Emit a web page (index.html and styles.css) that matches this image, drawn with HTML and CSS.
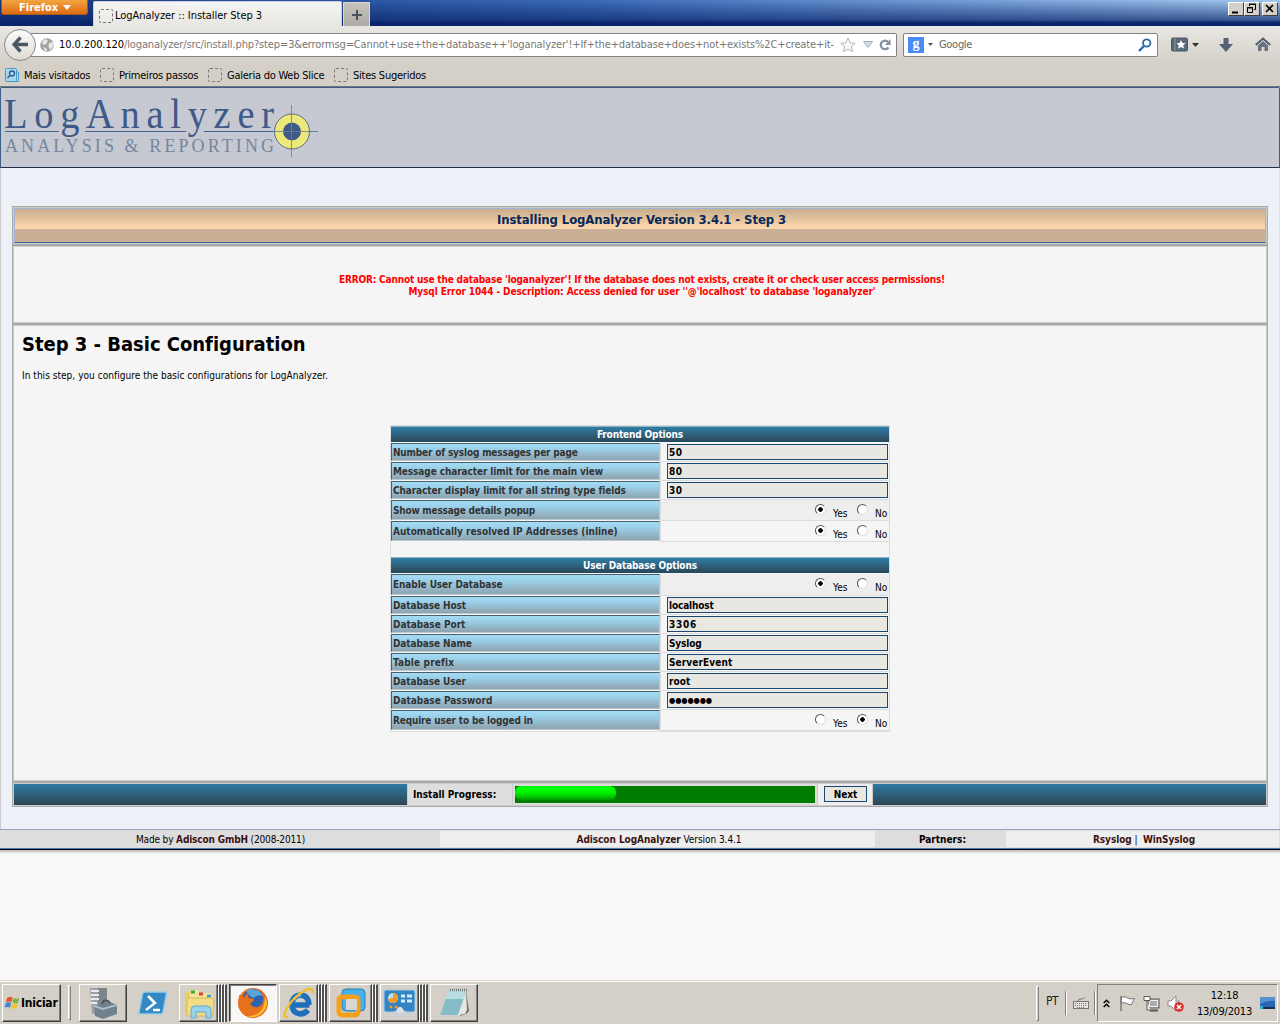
FILE: index.html
```html
<!DOCTYPE html>
<html lang="pt">
<head>
<meta charset="utf-8">
<title>LogAnalyzer :: Installer Step 3</title>
<link rel="stylesheet" href="styles.css">
</head>
<body>
<header class="titlebar">
  <div class="ff-button"><span>Firefox</span><svg width="8" height="5"><path d="M0 0h8L4 5z" fill="#fff"/></svg></div>
  <div class="tab"><i class="dotted"></i><span class="t-tab">LogAnalyzer :: Installer Step 3</span></div>
  <div class="newtab"><svg width="12" height="12"><path d="M6 1v10M1 6h10" stroke="#49525e" stroke-width="2"/></svg></div>
  <div class="winbtns">
    <b><svg width="15" height="13"><path d="M4 10.500h6" stroke="#000" stroke-width="2"/></svg></b>
    <b><svg width="15" height="13" fill="none" stroke="#000"><path d="M5.500 4V2.500h6v5H10M5 2h7M3.500 5.500h5v5h-5zM3 6h6"/></svg></b>
    <b class="close"><svg width="15" height="13"><path d="M4 3l7 7M11 3l-7 7" stroke="#000" stroke-width="1.600"/></svg></b>
  </div>
</header>
<nav class="toolbar">
  <div class="back"><svg width="17" height="17"><path d="M8.500 1.500L2 8.500l6.500 7M2.500 8.500H16" fill="none" stroke="#4a5866" stroke-width="3.400"/></svg></div>
  <div class="urlbar">
    <svg width="14" height="14"><circle cx="7" cy="7" r="6.800" fill="#a3a3a3"/><path d="M2 3l4-2 2 2-2 3-3 1zM9 5l4-1 .5 4-3 4-2-3zM3 9l3 1 1 3-2 0z" fill="#e8e8e8"/></svg>
    <span class="url"><em>10.0.200.120</em><span class="t-url">/loganalyzer/src/install.php?step=3&amp;errormsg=Cannot+use+the+database++'loganalyzer'!+If+the+database+does+not+exists%2C+create+it-</span></span>
    <svg class="star" width="16" height="16"><path d="M8 1l2.100 4.800 5 .5-3.800 3.400 1.200 5.100L8 12.100l-4.500 2.700 1.200-5.100L.9 6.300l5-.5z" fill="#fafafa" stroke="#b5b5b5"/></svg>
    <svg class="drop" width="10" height="7"><path d="M.5.500h9L5 6.500z" fill="#d9dfe6" stroke="#9eabb8"/></svg>
    <svg class="reload" width="12" height="12"><path d="M9.500 8.500a4.300 4.300 0 1 1-.3-5.500" fill="none" stroke="#8190a0" stroke-width="2.200"/><path d="M11.500 0v6H6z" fill="#8190a0"/></svg>
  </div>
  <div class="search">
    <span class="g">g</span><svg width="5" height="3"><path d="M0 0h5L2.500 3z" fill="#555"/></svg><span class="t-goo">Google</span>
    <svg class="lens" width="14" height="14"><circle cx="8.700" cy="5" r="3.700" fill="none" stroke="#2a68b0" stroke-width="1.800"/><path d="M6 8L1 13" stroke="#2a68b0" stroke-width="2.400"/></svg>
  </div>
  <svg class="bm" width="28" height="15"><rect x=".5" y="1" width="16" height="13" rx="1.500" fill="#5b6a78" stroke="#465564"/><path d="M4 1v13" stroke="#8996a2"/><path d="M10 3l1.400 3 3.100.3-2.300 2.100.8 3.200-3-1.700-3 1.700.8-3.200-2.300-2.100 3.100-.3z" fill="#fff"/><path d="M21 6h7l-3.500 4z" fill="#333"/></svg>
  <svg class="dl" width="14" height="14"><path d="M4.500 0h5v6H14l-7 8-7-8h4.500z" fill="#536273"/></svg>
  <svg class="home" width="16" height="15"><path d="M.8 8L8 1.500 15.200 8" fill="none" stroke="#4d5c6c" stroke-width="2"/><path d="M3 8.500l5-4.500 5 4.500V14H9.500v-4h-3v4H3z" fill="#66737f"/></svg>
</nav>
<nav class="bookmarks">
  <svg width="14" height="15"><rect x=".5" y=".5" width="11" height="13" rx="1" fill="#a8d4ee" stroke="#4a9ac8"/><path d="M12 4h1.500v9.500H6" fill="none" stroke="#4a9ac8"/><circle cx="7" cy="5.500" r="2.500" fill="none" stroke="#205d90" stroke-width="1.300"/><path d="M5 7.500L2.500 10" stroke="#205d90" stroke-width="1.500"/></svg>
  <span class="b1">Mais visitados</span><i class="dotted"></i>
  <span class="b2">Primeiros passos</span><i class="dotted"></i>
  <span class="b3">Galeria do Web Slice</span><i class="dotted"></i>
  <span>Sites Sugeridos</span>
</nav>

<main class="page">
  <div class="logo">
    <svg width="330" height="78" viewBox="0 0 330 78" font-family="Liberation Serif, serif">
      <path d="M4 43.500H58M84 43.500H185M203 43.500H317" stroke="#44618f"/>
      <g transform="scale(1 1.12)"><text x="3" y="35.700" font-size="38.500" textLength="270" fill="#3f5a87">LogAnalyzer</text></g>
      <text x="4" y="64" font-size="18" textLength="269" fill="#76869e">ANALYSIS &amp; REPORTING</text>
      <circle cx="291" cy="43.500" r="17.500" fill="#ece97b" stroke="#5a6b88"/>
      <circle cx="291" cy="43.500" r="9" fill="#3f5a87"/>
      <path d="M290.500 17v52M272 43.500h45" stroke="#6d7e9a" stroke-opacity=".85"/>
    </svg>
  </div>
  <section class="install">
    <div class="banner"><h2>Installing LogAnalyzer Version 3.4.1 - Step 3</h2></div>
    <div class="error">
      <p class="e1">ERROR: Cannot use the database 'loganalyzer'! If the database does not exists, create it or check user access permissions!</p>
      <p class="e2">Mysql Error 1044 - Description: Access denied for user ''@'localhost' to database 'loganalyzer'</p>
    </div>
    <div class="step">
      <h1>Step 3 - Basic Configuration</h1>
      <p class="intro">In this step, you configure the basic configurations for LogAnalyzer.</p>
      <form class="options">
        <div class="head">Frontend Options</div>
        <div class="row"><label class="s1">Number of syslog messages per page</label><div class="cell"><input value="50"></div></div>
        <div class="row"><label>Message character limit for the main view</label><div class="cell"><input value="80"></div></div>
        <div class="row"><label>Character display limit for all string type fields</label><div class="cell"><input value="30"></div></div>
        <div class="row tall alt"><label class="s2">Show message details popup</label><div class="cell"><i class="radio on"></i><span class="yes">Yes</span><i class="radio"></i><span class="no">No</span></div></div>
        <div class="row tall"><label class="s0">Automatically resolved IP Addresses (inline)</label><div class="cell"><i class="radio on"></i><span class="yes">Yes</span><i class="radio"></i><span class="no">No</span></div></div>
        <div class="spacer"></div>
        <div class="head">User Database Options</div>
        <div class="row tall alt extra"><label>Enable User Database</label><div class="cell"><i class="radio on"></i><span class="yes">Yes</span><i class="radio"></i><span class="no">No</span></div></div>
        <div class="row"><label>Database Host</label><div class="cell"><input class="in1" value="localhost"></div></div>
        <div class="row"><label class="s0">Database Port</label><div class="cell"><input class="in2" value="3306"></div></div>
        <div class="row"><label>Database Name</label><div class="cell"><input class="in1" value="Syslog"></div></div>
        <div class="row"><label class="sp">Table prefix</label><div class="cell"><input value="ServerEvent"></div></div>
        <div class="row"><label>Database User</label><div class="cell"><input value="root"></div></div>
        <div class="row"><label class="s0">Database Password</label><div class="cell"><input class="pw" value="●●●●●●●"></div></div>
        <div class="row tall"><label class="s1">Require user to be logged in</label><div class="cell"><i class="radio"></i><span class="yes">Yes</span><i class="radio on"></i><span class="no">No</span></div></div>
      </form>
    </div>
    <div class="progress">
      <div class="teal"></div>
      <div class="plabel">Install Progress:</div>
      <div class="pbar"><div class="track"><div class="fill"></div></div></div>
      <div class="pnext"><button type="button">Next</button></div>
      <div class="teal"></div>
    </div>
  </section>
  <footer class="footer">
    <div class="f1">Made by <b>Adiscon GmbH</b> (2008-2011)</div>
    <div class="f2"><b>Adiscon LogAnalyzer</b> Version 3.4.1</div>
    <div class="f3"><strong>Partners:</strong></div>
    <div class="f4"><b>Rsyslog</b> | &nbsp;<b>WinSyslog</b></div>
  </footer>
</main>
<div class="void"></div>

<footer class="taskbar">
  <div class="tbtn start"><svg width="17" height="16"><path d="M3 3q3-2 5.500-.5L7.500 7Q5 6 2 7z" fill="#e8542a"/><path d="M9.300 3q3 1.500 6 0L14 8q-3 1.200-5.500-.3z" fill="#7db53c"/><path d="M1.800 8q3-1.300 5.300 0L6 12.500Q3 11.300.6 12.500z" fill="#3b86d8"/><path d="M8.200 8.600q2.500 1.500 5.500.2L12.500 13q-2.500 1.500-5.500 0z" fill="#f7c22c"/></svg><span>Iniciar</span></div>
  <i class="grip"></i>
  <div class="tbtn w48 g1"><svg width="34" height="34"><path d="M4 2h9v26H6z" fill="#9ba1a6"/><path d="M12 2h9v20h-9z" fill="#7d848a"/><path d="M5 5h8M5 9h8M5 13h8M5 17h6" stroke="#e8ecee" stroke-width="2"/><path d="M8 20l16-4 7 3v9l-14 5-8-3z" fill="#71828f"/><path d="M8 20l9 3 14-4" stroke="#aebcc6" fill="none" stroke-width="2"/><path d="M16 18q1-5 6-3l2 2" stroke="#4b5860" fill="none" stroke-width="2"/></svg></div>
  <svg class="ps" width="30" height="26"><path d="M7 2h20q2 0 1.500 2L25 22q-.5 2-2.500 2H2.500Q.5 24 1 22L4.500 4Q5 2 7 2z" fill="#3289c4" stroke="#9ccbe6" stroke-width="1.500"/><path d="M10 6l7 7-9 7M15 20h7" fill="none" stroke="#fff" stroke-width="2.500"/></svg>
  <div class="tbtn w38 g2"><svg width="34" height="32"><path d="M3 5l10-1 3 3 14 3v20l-27-2z" fill="#e9cd6e"/><path d="M8 3h8l2 3h10l3 3v18H8z" fill="#f5e29a"/><path d="M5 11h27l-1 18H5z" fill="#f3dc86" stroke="#d9b95a"/><path d="M9 5h4" stroke="#3da53d" stroke-width="3"/><path d="M17 7h4" stroke="#d8472c" stroke-width="3"/><path d="M25 9h4" stroke="#3e97da" stroke-width="2.500"/><path d="M9 31v-8q0-4 4-4h12q4 0 4 4v8h-5v-6H14v6z" fill="#9ad3ec" stroke="#5eabd0"/></svg></div><i class="stk"></i><i class="stk"></i><i class="stk last"></i>
  <div class="tbtn w48 active"><svg width="32" height="32"><circle cx="16" cy="16" r="15" fill="#e66a1b"/><circle cx="16" cy="12.500" r="10.500" fill="#2c63ac"/><path d="M9 4q6-4 13 0l4 5q-5-2-8 1t-9-6z" fill="#58a5dc"/><path d="M2 8l5 3q1-4 5-5-2 3 0 5l5 1q0 3-4 4 2 5 8 4 5-2 6-8 1 3 0 5 2-5-1-11 8 9 2 18-6 8-15 6Q0 26 2 8z" fill="#e8711b"/><path d="M28 9q5 11-4 18-7 5-14 2 12 0 16-8 2-5 2-12z" fill="#fbc02e"/></svg></div>
  <div class="tbtn w38 g3"><svg width="34" height="32"><path d="M27.500 18H12.500M26 23q-3 4-8 4-8-1-8-9.500T18 8q8.500 0 9 10" fill="none" stroke="#1f6fbd" stroke-width="5.500"/><path d="M12 13q2-5 7-4.500" fill="none" stroke="#6fc0f0" stroke-width="2.500"/><path d="M6 30q-6 1-2-7Q10 11 22 4q9-5 9 2" fill="none" stroke="#f2bd2e" stroke-width="2.500"/></svg></div><i class="stk"></i><i class="stk"></i><i class="stk last"></i>
  <div class="tbtn w43 g4"><svg width="32" height="32"><rect x="7" y="2" width="23" height="22" rx="4" fill="#4ab0ea" stroke="#257fb8"/><rect x="4" y="10" width="19" height="18" rx="3" fill="none" stroke="#f5a01d" stroke-width="5"/><rect x="12" y="8" width="14" height="14" fill="none" stroke="#f5a01d" stroke-width="0"/><path d="M11 12h11v11H11z" fill="#d8d7d0"/></svg></div><i class="stk"></i><i class="stk last"></i>
  <div class="tbtn w38 g5"><svg width="34" height="32"><rect x="1" y="3" width="31" height="22" rx="2" fill="#3384c4" stroke="#a4cfeb"/><circle cx="10" cy="11" r="5" fill="#b9def5"/><path d="M10 11V6a5 5 0 1 1-5 6z" fill="#f39a28"/><path d="M18 9h4M18 14h4M24 9h5M24 14h5" stroke="#d5ecf8" stroke-width="3"/><circle cx="8" cy="20" r="1.500" fill="#f39a28"/><circle cx="13" cy="20" r="1.500" fill="#f39a28"/><ellipse cx="17" cy="27" rx="7" ry="4.500" fill="#cdd1d5"/><circle cx="17" cy="23" r="3" fill="#e0e3e6"/></svg></div><i class="stk"></i><i class="stk"></i><i class="stk last"></i>
  <div class="tbtn w48"><svg width="34" height="32"><path d="M12 3h17l-5 23-5 2H3z" fill="#86bcc8"/><path d="M12 3h17l-2 9H8z" fill="#b9dde3"/><path d="M29 4l3 20-3 3-6 2z" fill="#6a6f66"/><path d="M29 5l-8 23 7-1 2-4z" fill="#e6e8e0"/><path d="M13 3h17" stroke="#6e7d80" stroke-width="2.500" stroke-dasharray="1 1"/></svg></div>
  <div class="tray-left"><i class="grip"></i><span class="pt">PT</span><i class="thin"></i>
    <svg width="17" height="14"><rect x=".5" y="5.500" width="15" height="7" fill="#e6e4de" stroke="#777"/><path d="M2 7.500h12M2 9.500h12M4 11.500h8" stroke="#777" stroke-dasharray="1 1"/><path d="M5 5q0-2 3-2t4-2" stroke="#777" fill="none"/></svg><i class="thin k"></i></div>
  <div class="tray">
    <svg class="chev" width="7" height="9"><path d="M.7 4l2.800-2.700L6.300 4M.7 8l2.800-2.700L6.300 8" fill="none" stroke="#000" stroke-width="1.500"/></svg>
    <svg class="flag" width="17" height="17"><path d="M2 1v15" stroke="#777" stroke-width="1.500"/><path d="M2.500 2q4-1 6 1 2 1.500 7 .5-2 3-3 6-3 .5-4-.8-2-1.500-6-.7z" fill="#fff" stroke="#777"/></svg>
    <svg class="net" width="17" height="17"><rect x="5" y="4" width="11" height="9" fill="#c4c2bd" stroke="#555"/><rect x="6.500" y="5.500" width="8" height="6" fill="#aaa" stroke="#fff" stroke-width=".8"/><path d="M7 15.500h8" stroke="#555" stroke-width="2"/><path d="M1 1.500h6v4H1zM4 6v9h3" fill="#fff" stroke="#555"/></svg>
    <svg class="vol" width="18" height="17"><path d="M1 6h3l5-5v15l-5-5H1z" fill="#fff" stroke="#888"/><path d="M11 5q2 2 0 4" stroke="#888" fill="none"/><circle cx="12" cy="12" r="4.800" fill="#d93030"/><path d="M10 10l4 4M14 10l-4 4" stroke="#fff" stroke-width="1.600"/></svg>
    <div class="clock"><span>12:18</span><span>13/09/2013</span></div>
    <svg class="desk" width="15" height="14"><rect y="1" width="15" height="11" fill="#2a66b4"/><path d="M0 1h15v4Q8 4 0 8z" fill="#5590d2"/><path d="M3 12h12" stroke="#1b2f55" stroke-width="2"/><path d="M0 10h3v3H0z" fill="#2cb3d8"/></svg>
  </div>
</footer>
</body>
</html>
```
FILE: styles.css
```css
* { box-sizing: border-box; }
body { margin: 0; width: 1280px; height: 1024px; overflow: hidden; display: flex; flex-direction: column; background: #f9f9f9; font: 11px/13px "DejaVu Sans Condensed", "DejaVu Sans", sans-serif; color: #000; }
p, h1, h2 { margin: 0; }
svg { display: block; flex: none; }
span, em, p { white-space: nowrap; font-style: normal; }
i { display: block; flex: none; }
.void { height: 130px; flex: none; background: linear-gradient(#b8b8b8, #f9f9f9 4px); }

.titlebar { height: 26px; flex: none; display: flex; align-items: flex-start; background: linear-gradient(180deg, transparent 20px, #0a246a 23px), linear-gradient(180deg, transparent, rgba(10,36,106,.75) 22px), linear-gradient(90deg, #17387c, #3a6ab8 45%, #a6caf0); }
.ff-button { width: 87px; height: 15px; margin-left: 1px; padding-left: 17px; display: flex; align-items: center; gap: 5px; background: linear-gradient(#f3a541, #dd6b12); border-radius: 0 0 3px 3px; border: 1px solid #a8591c; border-top: 0; color: #fff; font-weight: bold; }
.tab { width: 249px; height: 25px; margin: 1px 1px 0 5px; padding: 3px 0 0 5px; display: flex; align-items: center; gap: 2px; background: linear-gradient(#f4f4f2, #e9e7e3); border: 1px solid #c9d1e0; border-bottom: 0; border-radius: 2px 2px 0 0; }
.t-tab { letter-spacing: -.056px; }
.dotted { width: 14px; height: 14px; border: 1px dashed #777; border-radius: 2px; }
.newtab { width: 27px; height: 24px; margin-top: 2px; display: flex; align-items: center; justify-content: center; background: linear-gradient(#c6c3bc, #aeaba4); border: 1px solid #dad7d0; border-bottom: 0; }
.winbtns { margin: 2px 2px 0 auto; display: flex; }
.winbtns b { width: 16px; height: 14px; background: #d4d0c8; border: 1px solid; border-color: #fff #404040 #404040 #fff; }
.winbtns svg { margin: -1px; }
.winbtns .close { margin-left: 2px; }

.toolbar { height: 37px; flex: none; display: flex; align-items: center; padding: 0 9px 0 4px; background: linear-gradient(#e9e7e3, #d4d0c8); }
.back { width: 32px; height: 32px; margin-right: -5px; z-index: 1; border: 1px solid #84888c; border-radius: 50%; background: linear-gradient(#fbfbfa, #dedbd5); display: flex; align-items: center; justify-content: center; }
.urlbar { width: 866px; height: 24px; border: 1px solid #828282; border-left: 0; border-radius: 0 2px 2px 0; background: #fff; display: flex; align-items: center; padding-left: 9px; }
.url { width: 781px; margin-left: 5px; color: #777; display: flex; }
.url em { color: #000; letter-spacing: -.09px; }
.t-url { letter-spacing: -.127px; }
.drop { margin-left: 7px; }
.reload { margin-left: 6px; }
.search { width: 255px; height: 24px; margin-left: 6px; padding: 0 5px 0 4px; border: 1px solid #828282; border-radius: 2px; background: #fff; display: flex; align-items: center; color: #666; }
.g { width: 16px; height: 16px; background: #4a8af4; color: #fff; text-align: center; font: bold 14px/14px "Liberation Serif", serif; margin-right: 4px; }
.t-goo { margin-left: 6px; letter-spacing: -.3px; }
.lens { margin-left: auto; }
.bm { margin-left: 13px; }
.dl { margin-left: 20px; }
.home { margin-left: auto; }

.bookmarks { height: 24px; flex: none; display: flex; align-items: center; padding: 1px 0 0 5px; background: #d4d0c8; border-bottom: 1px solid #6d7580; letter-spacing: -.24px; }
.bookmarks span { margin-left: 5px; }
.bookmarks .b1 { width: 76px; }
.bookmarks .b2 { width: 89px; }
.bookmarks .b3 { width: 107px; }

.page { height: 763px; flex: none; display: flex; flex-direction: column; background: #edf0f6; border-left: 1px solid #ccc; border-right: 1px solid #ddd; border-top: 1px solid #3d5c80; font-size: 10px; line-height: 12px; }
.logo { height: 80px; margin: 0 -1px; background: #c6c9d2; border: 1px solid #3d6088; border-width: 0 1px 1px; border-bottom-color: #1e2c44; flex: none; }
.install { margin: 38px 11px 0; height: 601px; flex: none; border: 1px solid #a8a8a8; display: flex; flex-direction: column; gap: 2px; background: #a8a8a8; }
.banner { height: 37px; flex: none; padding: 1px; background: #ccc; }
.banner h2 { height: 35px; border: 1px solid; border-color: #9fb6d8 #9fb6d8 #3a60a0; background: linear-gradient(#c8ad8c, #ffd9ae 20px, #c8af96 20px); text-align: center; color: #06285a; font-size: 13px; line-height: 21px; padding-left: 3px; letter-spacing: -.1px; }
.error { height: 77px; flex: none; border: 1px solid #ccc; background: #f5f5f5; padding: 27px 0 0 4px; text-align: center; font-weight: bold; color: #f00; }
.e1 { letter-spacing: -.168px; }
.e2 { letter-spacing: -.107px; }
.step { height: 456px; flex: none; border: 1px solid #ccc; background: #f5f5f5; padding: 6px 8px 0; }
h1 { font-size: 20px; line-height: 24px; letter-spacing: -.02px; }
.intro { margin-top: 14px; letter-spacing: .035px; }
.options { width: 500px; margin: 43px 0 0 368px; border: 1px solid #dcdcdc; font-weight: bold; }
.head { height: 16px; margin-bottom: 1px; text-align: center; color: #fff; line-height: 15px; background: linear-gradient(#2f7da6, #2d4a5a); border-top: 1px solid #8eb4c4; border-bottom: 1px solid #1c4b63; letter-spacing: -.14px; }
.row { height: 19px; display: flex; }
.tall { height: 21px; }
.extra { height: 22px; }
.row label { width: 269px; height: calc(100% - 1px); border: 1px solid; border-color: #48616c #b9c9d0 #b9c9d0 #48616c; background: linear-gradient(#a3dbf5, #9bd0ea 30%, #8fa3ae); color: #333; padding: 2px 0 0 1px; display: flex; align-items: center; letter-spacing: -.105px; white-space: nowrap; }
.extra label { padding-top: 0; }
.row .s0 { letter-spacing: -.01px; }
.row .s1 { letter-spacing: -.172px; }
.row .s2 { letter-spacing: -.228px; }
.row .sp { letter-spacing: .15px; }
.cell { flex: 1; border-left: 1px solid #dcdcdc; border-bottom: 1px solid #dcdcdc; display: flex; justify-content: flex-end; padding: 1px 1px 0 0; }
.alt .cell { background: #eee; }
input { width: 221px; height: 16px; border: 1px solid #1b4670; border-radius: 0; background: #e8e7e1; padding: 0 1px; margin: 0; font: bold 10px/14px "DejaVu Sans Condensed", sans-serif; letter-spacing: .1px; color: #000; outline: 0; }
input[value="50"], input[value="80"], input[value="30"] { letter-spacing: .6px; }
.in1 { letter-spacing: -.15px; }
.in2 { letter-spacing: .7px; }
.pw { font-size: 8px; letter-spacing: -.15px; }
.cell span { font-weight: normal; line-height: 12px; padding-top: 7px; height: 18px; }
.yes { width: 15px; margin: 0 9px 0 7px; }
.no { width: 13px; margin-left: 7px; }
.radio { width: 11px; height: 11px; margin-top: 3px; border-radius: 50%; border: 1px solid; border-color: #555 #ddd #ddd #555; background: #fff; }
.radio.on { background: radial-gradient(circle, #000 2px, #fff 2.500px); }
.spacer { height: 14px; }
.options .spacer + .head { margin-top: 1px; }

.progress { height: 23px; flex: none; border: 1px solid #ccc; display: flex; background: #ccc; gap: 1px; }
.teal { width: 393px; background: linear-gradient(#2d7ba4, #2d4450); }
.plabel { width: 104px; background: #dedede; padding-left: 5px; line-height: 22px; font-weight: bold; }
.pbar { width: 304px; background: #ddd; padding: 2px; }
.track { height: 17px; background: #007c00; }
.fill { width: 101px; height: 14px; border-radius: 6px; background: linear-gradient(#0f0 30%, #00e000 60%, #009a00); }
.pnext { width: 54px; background: #eee; padding: 2px 0 0 6px; }
button { width: 43px; height: 16px; border: 1px solid #1b4670; background: #e8e7e1; padding: 1px 0 0; font: bold 10px/12px "DejaVu Sans Condensed", sans-serif; display: block; }
.footer { height: 21px; margin: 22px -1px 0; flex: none; border-top: 1px solid #90a5bf; border-bottom: 1px solid #000; box-shadow: inset 0 -1px #4a7cb8; background: #ddd; display: flex; padding: 1px 1px 2px; text-align: center; line-height: 18px; }
.footer b { color: #3c1414; }
.f1 { width: 439px; letter-spacing: -.15px; }
.f2 { width: 435px; background: #eee; padding-left: 3px; letter-spacing: -.06px; }
.f3 { width: 131px; padding-left: 4px; }
.f4 { flex: 1; background: #eee; padding-left: 3px; letter-spacing: -.08px; }

.taskbar { height: 44px; flex: none; background: #d4d0c8; border-top: 1px solid #d4d0c8; box-shadow: inset 0 1px #fff; display: flex; padding: 3px 2px 2px; }
.tbtn { height: 38px; background: #d4d0c8; border: 1px solid; border-color: #fff #404040 #404040 #fff; box-shadow: inset -1px -1px #808080; display: flex; align-items: center; justify-content: center; flex: none; }
.start { width: 59px; font-weight: bold; font-size: 12px; justify-content: flex-start; padding-left: 1px; letter-spacing: -.23px; }
.grip { width: 3px; height: 35px; margin: 1px 8px 0 7px; border: 1px solid; border-color: #fff #808080 #808080 #fff; }
.w48 { width: 48px; }
.w38 { width: 39px; }
.w43 { width: 43px; }
.ps { margin: 6px 11px 0; }
.stk { width: 3px; height: 38px; border-right: 2px solid #505050; border-top: 1px solid #fff; border-left: 1px solid #fff; }
.last { margin-right: 2px; }
.active { background: #f8f7f5; border-color: #404040 #fff #fff #404040; box-shadow: inset 1px 1px #808080; margin-right: 2px; }
.tray-left { margin-left: auto; display: flex; align-items: center; }
.tray-left .grip { margin: 0 7px 0 0; }
.pt { font-size: 12px; width: 16px; color: #222; letter-spacing: -.5px; margin-top: -3px; }
.thin { width: 2px; height: 24px; border-left: 1px solid #808080; border-right: 1px solid #fff; margin: 0 6px 0 3px; }
.k { margin: 0 1px 0 4px; }
.tray { width: 181px; height: 38px; border: 1px solid; border-color: #808080 #fff #fff #808080; display: flex; align-items: center; padding-left: 5px; }
.flag { margin-left: 9px; }
.net { margin-left: 7px; }
.vol { margin-left: 7px; }
.clock { width: 57px; margin-left: 11px; display: flex; flex-direction: column; align-items: center; line-height: 16px; letter-spacing: -.2px; padding-top: 1px; }
.desk { margin-left: 7px; }
```
